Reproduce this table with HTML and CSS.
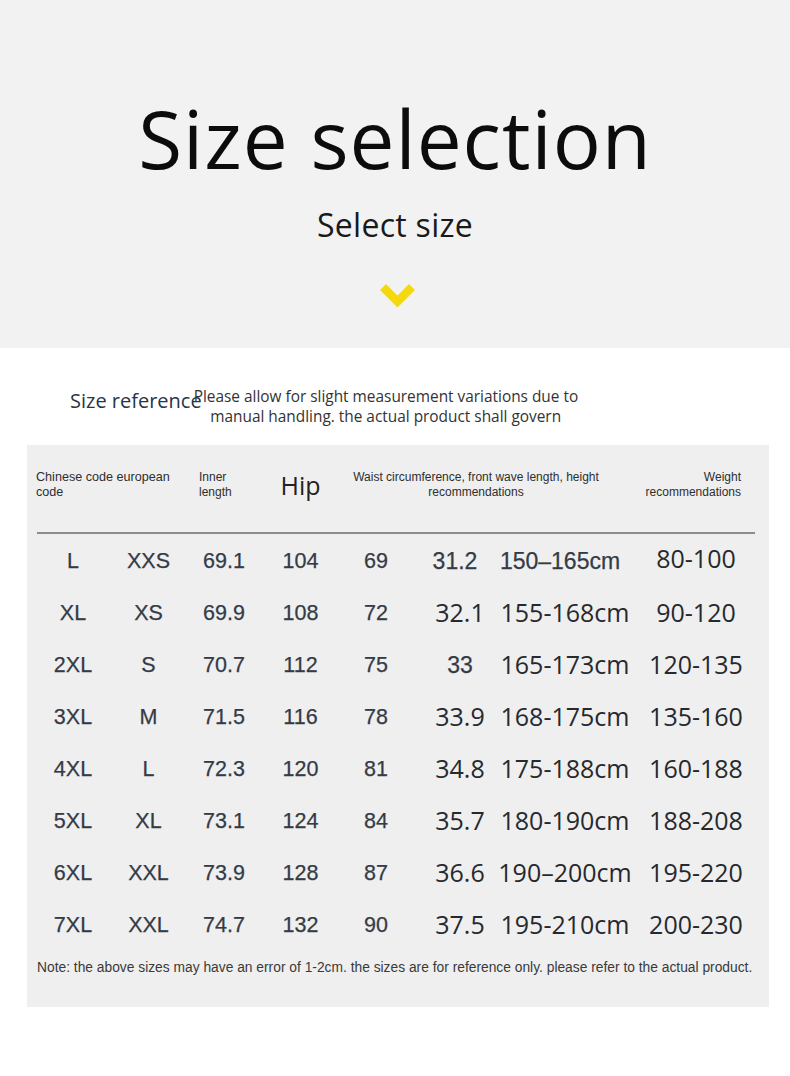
FILE: index.html
```html
<!DOCTYPE html>
<html lang="en">
<head>
<meta charset="utf-8">
<title>Size selection</title>
<link rel="stylesheet" href="styles.css">
</head>
<body>
<header class="hero">
  <h1 class="hero-title">Size selection</h1>
  <p class="hero-sub">Select size</p>
  <svg class="chevron" width="37" height="26" viewBox="0 0 37 26" aria-hidden="true">
    <polygon points="1,7 7,1 18.5,12.5 30,1 36,7 18.5,24.5" fill="#f6d80f"/>
  </svg>
</header>

<section class="ref">
  <div class="ref-head">
    <h2 class="ref-title">Size reference</h2>
    <p class="ref-note">Please allow for slight measurement variations due to<br>manual handling. the actual product shall govern</p>
  </div>

  <div class="panel">
    <div class="thead">
      <div class="h h-code">Chinese code european<br>code</div>
      <div class="h h-inner">Inner<br>length</div>
      <div class="h h-hip">Hip</div>
      <div class="h h-waist">Waist circumference, front wave length, height<br>recommendations</div>
      <div class="h h-weight">Weight<br>recommendations</div>
    </div>
    <div class="divider"></div>

    <div class="tbody">
      <div class="row">
        <span class="c">L</span><span class="c">XXS</span><span class="c">69.1</span><span class="c">104</span><span class="c">69</span>
        <span class="c c-lg c-left">31.2</span><span class="c c-lg c-left">150–165cm</span><span class="n n-up">80-100</span>
      </div>
      <div class="row">
        <span class="c">XL</span><span class="c">XS</span><span class="c">69.9</span><span class="c">108</span><span class="c">72</span>
        <span class="n">32.1</span><span class="n">155-168cm</span><span class="n">90-120</span>
      </div>
      <div class="row">
        <span class="c">2XL</span><span class="c">S</span><span class="c">70.7</span><span class="c">112</span><span class="c">75</span>
        <span class="c c-lg">33</span><span class="n">165-173cm</span><span class="n">120-135</span>
      </div>
      <div class="row">
        <span class="c">3XL</span><span class="c">M</span><span class="c">71.5</span><span class="c">116</span><span class="c">78</span>
        <span class="n">33.9</span><span class="n">168-175cm</span><span class="n">135-160</span>
      </div>
      <div class="row">
        <span class="c">4XL</span><span class="c">L</span><span class="c">72.3</span><span class="c">120</span><span class="c">81</span>
        <span class="n">34.8</span><span class="n">175-188cm</span><span class="n">160-188</span>
      </div>
      <div class="row">
        <span class="c">5XL</span><span class="c">XL</span><span class="c">73.1</span><span class="c">124</span><span class="c">84</span>
        <span class="n">35.7</span><span class="n">180-190cm</span><span class="n">188-208</span>
      </div>
      <div class="row">
        <span class="c">6XL</span><span class="c">XXL</span><span class="c">73.9</span><span class="c">128</span><span class="c">87</span>
        <span class="n">36.6</span><span class="n">190–200cm</span><span class="n">195-220</span>
      </div>
      <div class="row">
        <span class="c">7XL</span><span class="c">XXL</span><span class="c">74.7</span><span class="c">132</span><span class="c">90</span>
        <span class="n">37.5</span><span class="n">195-210cm</span><span class="n">200-230</span>
      </div>
    </div>

    <p class="note">Note: the above sizes may have an error of 1-2cm. the sizes are for reference only. please refer to the actual product.</p>
  </div>
</section>
</body>
</html>
```

FILE: styles.css
```css
* { box-sizing: border-box; }

html, body {
  margin: 0;
  padding: 0;
  background: #ffffff;
}

body {
  width: 790px;
  font-family: "Open Sans", "Noto Sans", sans-serif;
  color: #222;
}

/* ---------- hero ---------- */
.hero {
  height: 348px;
  background: #f2f2f2;
  display: flex;
  flex-direction: column;
  align-items: center;
  padding-top: 98px;
}

.hero-title {
  margin: 0;
  font-family: "Open Sans", "Noto Sans", sans-serif;
  font-weight: 400;
  font-size: 80px;
  line-height: 80px;
  color: #0c0c0c;
  letter-spacing: 1px;
}

.hero-sub {
  margin: 31px 0 0;
  font-family: "Open Sans", "Noto Sans", sans-serif;
  font-weight: 500;
  font-size: 32px;
  line-height: 32px;
  color: #1a1a1a;
  letter-spacing: 0.3px;
}

.chevron {
  display: block;
  margin: 42px 0 0 5px;
}

/* ---------- reference header ---------- */
.ref-head {
  display: flex;
  align-items: flex-start;
  padding: 39px 0 0 70px;
}

.ref-title {
  margin: 2px 0 0;
  font-family: "Open Sans", "Noto Sans", sans-serif;
  font-weight: 400;
  font-size: 20px;
  line-height: 24px;
  color: #263648;
  white-space: nowrap;
}

.ref-note {
  margin: 0 0 0 -8px;
  width: 384px;
  font-family: "Open Sans", "Noto Sans", sans-serif;
  font-size: 15.4px;
  line-height: 20px;
  color: #333;
  text-align: center;
  white-space: nowrap;
}

/* ---------- panel ---------- */
.panel {
  margin: 18px 21px 0 27px;
  background: #efefef;
  padding: 25px 0 30px 8px;
}

.thead,
.row {
  display: grid;
  grid-template-columns: 76px 75px 76px 77px 74px 94px 116px 146px;
}

.thead {
  align-items: center;
  font-family: "Liberation Sans", Arial, sans-serif;
  font-size: 12px;
  line-height: 15px;
  color: #2e2e2e;
}

.h-code {
  grid-column: 1 / span 2;
  padding-left: 1px;
  font-size: 12.6px;
  white-space: nowrap;
}

.h-inner {
  padding-left: 13px;
}

.h-hip {
  text-align: center;
  font-size: 25px;
  line-height: 30px;
  font-family: "Open Sans", "Noto Sans", sans-serif;
  color: #222;
}

.h-waist {
  grid-column: 5 / span 3;
  text-align: center;
  padding-right: 10px;
  white-space: nowrap;
}

.h-weight {
  text-align: right;
  padding-right: 28px;
}

.divider {
  margin: 32px 0 0 2px;
  width: 718px;
  height: 2px;
  background: #8c8c8c;
}

.tbody {
  margin-top: 1px;
}

.row {
  height: 52px;
  align-items: center;
}

.row > span {
  display: flex;
  justify-content: center;
  white-space: nowrap;
}

.c {
  font-family: "Liberation Sans", Arial, sans-serif;
  font-size: 21.5px;
  color: #343b46;
  -webkit-text-stroke: 0.25px #343b46;
}

.c-lg {
  font-size: 23px;
}

.row > .c-left {
  padding-right: 10px;
}

.n {
  font-family: "Open Sans", "Noto Sans", sans-serif;
  font-size: 25px;
  color: #26292e;
  margin-top: -3px;
}

.n-up {
  margin-top: -6px;
}

.note {
  margin: 8px 0 0 2px;
  font-family: "Liberation Sans", Arial, sans-serif;
  font-size: 13.8px;
  line-height: 18px;
  color: #3a3a3a;
  white-space: nowrap;
}
```
